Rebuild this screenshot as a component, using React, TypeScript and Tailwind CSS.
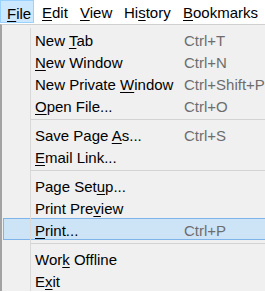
type Item = {
  before: string
  key: string
  after: string
  shortcut?: string
  active?: boolean
}

const groups: Item[][] = [
  [
    { before: "New ", key: "T", after: "ab", shortcut: "Ctrl+T" },
    { before: "", key: "N", after: "ew Window", shortcut: "Ctrl+N" },
    { before: "New Private ", key: "W", after: "indow", shortcut: "Ctrl+Shift+P" },
    { before: "", key: "O", after: "pen File...", shortcut: "Ctrl+O" },
  ],
  [
    { before: "Save Page ", key: "A", after: "s...", shortcut: "Ctrl+S" },
    { before: "", key: "E", after: "mail Link..." },
  ],
  [
    { before: "Page Set", key: "u", after: "p..." },
    { before: "Print Pre", key: "v", after: "iew" },
    { before: "", key: "P", after: "rint...", shortcut: "Ctrl+P", active: true },
  ],
  [
    { before: "Wor", key: "k", after: " Offline" },
    { before: "E", key: "x", after: "it" },
  ],
]

const menubar = [
  { before: "", key: "F", after: "ile", w: "w-[34px] pl-[6px]", open: true },
  { before: "", key: "E", after: "dit", w: "w-[38px] pl-[8px]" },
  { before: "", key: "V", after: "iew", w: "w-[44px] pl-[8px]" },
  { before: "Hi", key: "s", after: "tory", w: "w-[59px] pl-[8px]" },
  { before: "", key: "B", after: "ookmarks", w: "w-[90px] pl-[8px]" },
]

function Label({ before, k, after }: { before: string; k: string; after: string }) {
  return (
    <span className="whitespace-pre">
      {before}
      <span className="underline decoration-1 underline-offset-[2px]">{k}</span>
      {after}
    </span>
  )
}

function MenuRow({ item }: { item: Item }) {
  return (
    <div
      className={`flex h-[22px] ${
        item.active ? "bg-[#cde4f7] ring-1 ring-inset ring-[#7eb4ea]" : ""
      }`}
    >
      <div className="w-[28px] shrink-0 border-r border-[#d9d9d9]" />
      <div className="flex pt-[4px] pl-[4px] leading-[17px]">
        <div className="w-[149px] shrink-0 text-black">
          <Label before={item.before} k={item.key} after={item.after} />
        </div>
        {item.shortcut && <div className="whitespace-nowrap text-[#6d6d6d]">{item.shortcut}</div>}
      </div>
    </div>
  )
}

function Separator() {
  return (
    <div className="flex h-[7px]">
      <div className="w-[28px] shrink-0 border-r border-[#d9d9d9]" />
      <div className="flex flex-1 items-center">
        <div className="h-px w-full bg-[#d3d3d3]" />
      </div>
    </div>
  )
}

export default function App() {
  return (
    <div className="h-[292px] w-[265px] overflow-hidden bg-white font-['Liberation_Sans',Arial,sans-serif] text-[15px] text-black">
      {/* menu bar */}
      <div className="flex h-[24px] items-start">
        {menubar.map((m) => (
          <div
            key={m.after}
            className={`h-[23px] shrink-0 whitespace-nowrap pt-[4px] leading-[17px] ${m.w} ${
              m.open ? "border border-[#99d1ff] bg-[#cce8ff] pl-[5px]" : ""
            }`}
          >
            <Label before={m.before} k={m.key} after={m.after} />
          </div>
        ))}
      </div>

      {/* file menu */}
      <div className="w-[320px] border-t border-l-2 border-t-[#d0d0d0] border-l-[#a3a3a3] bg-[#f0f0f0] pt-[3px] pl-px">
        {groups.map((g, i) => (
          <div key={i}>
            {i > 0 && <Separator />}
            {g.map((item) => (
              <MenuRow key={item.before + item.key} item={item} />
            ))}
          </div>
        ))}
      </div>
    </div>
  )
}
